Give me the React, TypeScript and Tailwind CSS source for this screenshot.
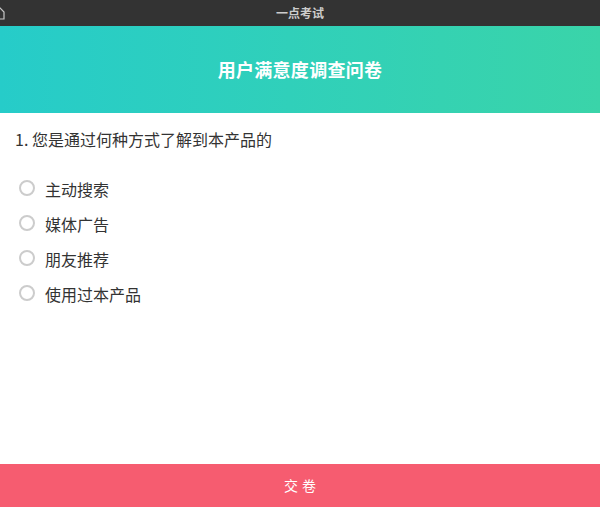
const font = "font-['Noto_Sans_CJK_SC','Liberation_Sans',sans-serif]";

const options = ["主动搜索", "媒体广告", "朋友推荐", "使用过本产品"];

function HomeIcon() {
  return (
    <svg width="12" height="14" viewBox="0 0 12 14" fill="none" stroke="#c8c8c8" strokeWidth="1.2">
      <path d="M0 1 L4 5 V12 H-4 V5 Z" />
    </svg>
  );
}

export default function App() {
  return (
    <div className={`flex h-[507px] w-[600px] flex-col overflow-hidden bg-white ${font}`}>
      <div className="relative flex h-[26px] shrink-0 items-center justify-center bg-[#333333]">
        <div className="absolute left-0 top-[7px]">
          <HomeIcon />
        </div>
        <span className="text-[12px] font-bold text-[#cccccc]">一点考试</span>
      </div>

      <div className="flex h-[87px] shrink-0 items-center justify-center bg-gradient-to-r from-[#26ccc9] to-[#3ad4a9]">
        <h1 className="text-[18px] font-bold tracking-[0.3px] text-white">用户满意度调查问卷</h1>
      </div>

      <div className="flex-1 pl-[15px] pt-[15px]">
        <p className="text-[16px] leading-[22px] text-[#333333]">1. 您是通过何种方式了解到本产品的</p>
        <ul className="mt-[29px] flex flex-col pl-[4px]">
          {options.map((o) => (
            <li key={o} className="flex h-[35px] items-start">
              <span className="mt-[1px] size-[16px] rounded-full border-2 border-[#cccccc] bg-white" />
              <span className="ml-[10px] -mt-[2px] text-[16px] leading-[24px] text-[#333333]">{o}</span>
            </li>
          ))}
        </ul>
      </div>

      <button
        type="button"
        className="flex h-[43px] shrink-0 items-center justify-center bg-[#f65c70] pl-[4px] text-[14px] tracking-[4px] text-white"
      >
        交卷
      </button>
    </div>
  );
}
